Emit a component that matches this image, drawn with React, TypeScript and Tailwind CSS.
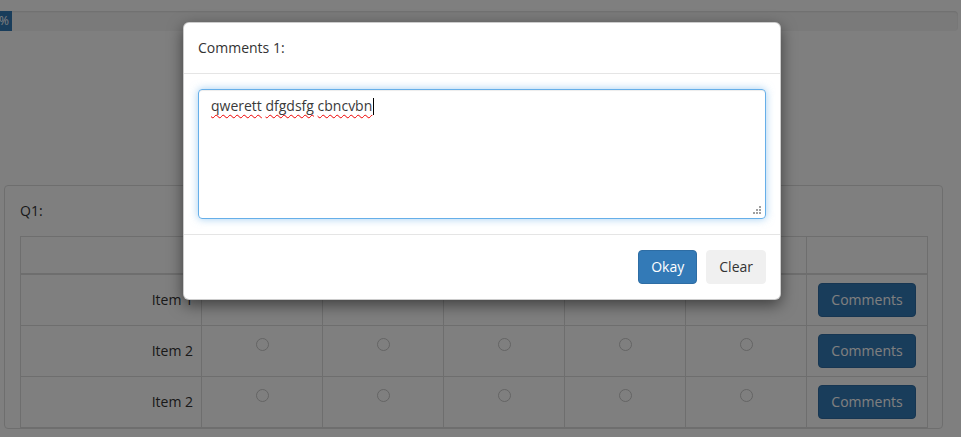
import React from "react";

const rows = ["Item 1", "Item 2", "Item 2"];
const cols = [1, 2, 3, 4, 5];

function Radio() {
  return <span className="mt-[4px] inline-block h-[13px] w-[13px] rounded-full border border-[#c8c8c8] bg-white" />;
}

function Grip() {
  return (
    <svg width="9" height="9" viewBox="0 0 9 9" className="absolute bottom-[3px] right-[3px]">
      {[
        [7, 1],
        [4, 4],
        [7, 4],
        [1, 7],
        [4, 7],
        [7, 7],
      ].map(([x, y], i) => (
        <rect key={i} x={x - 1} y={y - 1} width="2" height="2" fill="#a0a0a0" />
      ))}
    </svg>
  );
}

export default function App() {
  const words = ["qwerett", "dfgdsfg", "cbncvbn"];

  return (
    <div className="relative h-[437px] w-[961px] overflow-hidden bg-white font-['Open_Sans',sans-serif] text-[14px] leading-[20px] text-[#333]">
      {/* page underneath */}
      <div className="pt-[11px]">
        <div className="flex h-[20px] w-[958px] overflow-hidden rounded-r-[4px] bg-[#f5f5f5] shadow-[inset_0_1px_2px_rgba(0,0,0,0.1)]">
          <div className="flex h-full w-[12px] shrink-0 justify-end overflow-hidden bg-[#337ab7] pr-[3px] text-[12px] leading-[20px] text-white">
            <span className="shrink-0">0%</span>
          </div>
        </div>

        <div className="ml-[4px] mt-[154px] w-[939px] rounded-[4px] border border-[#ddd] px-[15px] pt-[15px]">
          <div className="mb-[15px]">Q1:</div>
          <table className="w-[907px] table-fixed border-collapse">
            <colgroup>
              <col className="w-[181px]" />
              {cols.map((c) => (
                <col key={c} className="w-[121px]" />
              ))}
              <col className="w-[121px]" />
            </colgroup>
            <thead>
              <tr>
                <th className="h-[37px] border border-b-2 border-[#ddd]" />
                {cols.map((c) => (
                  <th key={c} className="border border-b-2 border-[#ddd]" />
                ))}
                <th className="border border-b-2 border-[#ddd]" />
              </tr>
            </thead>
            <tbody>
              {rows.map((r, i) => (
                <tr key={i}>
                  <td className="border border-[#ddd] px-[8px] py-[8px] text-right align-middle">{r}</td>
                  {cols.map((c) => (
                    <td key={c} className="border border-[#ddd] p-[8px] text-center align-top">
                      <Radio />
                    </td>
                  ))}
                  <td className="border border-[#ddd] p-[8px] text-center">
                    <button className="rounded-[4px] border border-[#2e6da4] bg-[#337ab7] px-[12px] py-[6px] leading-[20px] text-white">
                      Comments
                    </button>
                  </td>
                </tr>
              ))}
            </tbody>
          </table>
        </div>
      </div>

      {/* backdrop */}
      <div className="absolute inset-0 bg-black/50" />

      {/* modal */}
      <div className="absolute left-[183px] top-[22px] w-[598px] rounded-[6px] border border-black/20 bg-white shadow-[0_5px_15px_rgba(0,0,0,0.5)]">
        <div className="border-b border-[#e5e5e5] px-[14px] py-[15px]">Comments 1:</div>
        <div className="px-[14px] py-[15px]">
          <div className="relative h-[130px] rounded-[4px] border border-[#66afe9] px-[12px] py-[6px] text-[#3a3a3a] shadow-[inset_0_1px_1px_rgba(0,0,0,0.075),0_0_8px_rgba(102,175,233,0.6)]">
            {words.map((w, i) => (
              <React.Fragment key={i}>
                <span className="underline decoration-[#e00] decoration-wavy decoration-1 underline-offset-[3px]">{w}</span>
                {i < words.length - 1 ? " " : null}
              </React.Fragment>
            ))}
            <span className="ml-px inline-block h-[17px] w-px bg-black align-[-4px]" />
            <Grip />
          </div>
        </div>
        <div className="flex justify-end gap-[9px] border-t border-[#e5e5e5] px-[14px] py-[15px]">
          <button className="rounded-[4px] border border-[#2e6da4] bg-[#337ab7] px-[12px] py-[6px] leading-[20px] text-white">
            Okay
          </button>
          <button className="rounded-[4px] border border-[#f0f0f0] bg-[#f0f0f0] px-[12px] py-[6px] leading-[20px] text-[#333]">
            Clear
          </button>
        </div>
      </div>
    </div>
  );
}
